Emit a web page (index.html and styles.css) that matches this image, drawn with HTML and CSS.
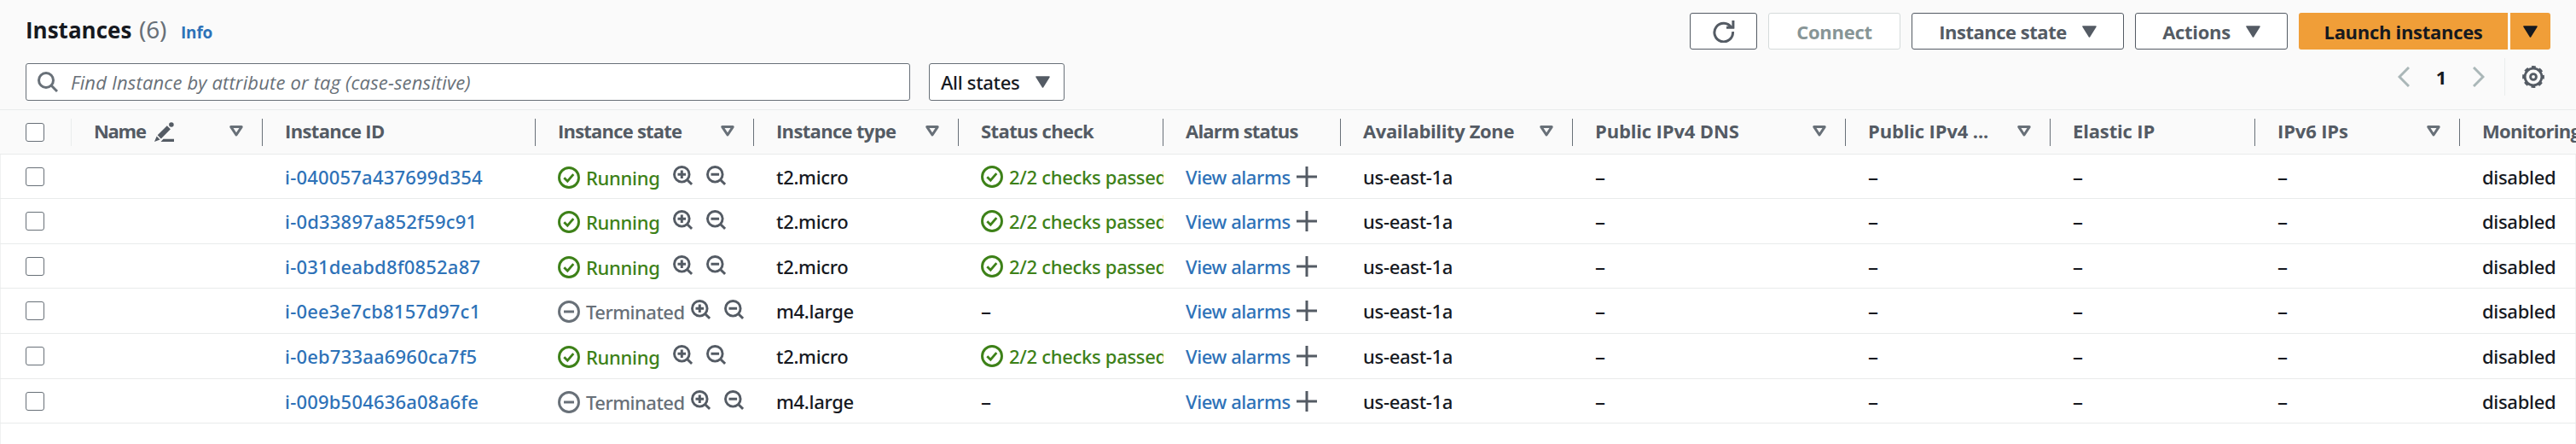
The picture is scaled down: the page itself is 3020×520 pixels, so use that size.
FILE: index.html
```
<!DOCTYPE html>
<html lang="en">
<head>
<meta charset="utf-8">
<title>Instances</title>
<link rel="stylesheet" href="styles.css">
</head>
<body>
<svg class="sprite" width="0" height="0">
  <symbol id="check" viewBox="0 0 26 26"><circle cx="13" cy="13" r="11.5" fill="none" stroke="currentColor" stroke-width="2.9"/><path d="M7.3 13.2l4 4 7-8" fill="none" stroke="currentColor" stroke-width="2.8"/></symbol>
  <symbol id="minus" viewBox="0 0 26 26"><circle cx="13" cy="13" r="11.5" fill="none" stroke="currentColor" stroke-width="2.9"/><path d="M7 13h12" stroke="currentColor" stroke-width="3"/></symbol>
  <symbol id="zin" viewBox="0 0 23 23"><circle cx="10.3" cy="10.3" r="8.8" fill="none" stroke="currentColor" stroke-width="2.9"/><path d="M16.5 16.5l5.6 5.4M5.5 10.3h9.6M10.3 5.5v9.6" fill="none" stroke="currentColor" stroke-width="3"/></symbol>
  <symbol id="zout" viewBox="0 0 23 23"><circle cx="10.3" cy="10.3" r="8.8" fill="none" stroke="currentColor" stroke-width="2.9"/><path d="M16.5 16.5l5.6 5.4M5.5 10.3h9.6" fill="none" stroke="currentColor" stroke-width="3"/></symbol>
  <symbol id="plus" viewBox="0 0 24 24"><path d="M0 12h24M12 0v24" stroke="currentColor" stroke-width="3"/></symbol>
  <symbol id="down" viewBox="0 0 17 14"><path d="M1 1h15l-7.5 12z" fill="currentColor" stroke="currentColor" stroke-width="1.5" stroke-linejoin="round"/></symbol>
  <symbol id="sort" viewBox="0 0 16 13"><path d="M1.8 1.6h12.4L8 11z" fill="none" stroke="currentColor" stroke-width="3" stroke-linejoin="round"/></symbol>
</svg>
<main class="panel">
  <header class="head">
    <div class="line">
      <h1 class="title">Instances</h1><span class="count">(6)</span><a class="info">Info</a>
      <div class="actions">
        <button class="btn refresh"><svg width="26" height="26" viewBox="0 0 26 26" fill="none" stroke="currentColor" stroke-width="3"><path d="M23.5 13.2A10.8 10.8 0 1 1 21.8 8.2M23.9 0v9M16 8.2h9.3"/></svg></button>
        <button class="btn connect">Connect</button>
        <button class="btn state-btn">Instance state<svg class="down"><use href="#down"/></svg></button>
        <button class="btn actions-btn">Actions<svg class="down"><use href="#down"/></svg></button>
        <div class="split">
          <button class="btn primary launch">Launch instances</button>
          <button class="btn primary more"><svg class="down"><use href="#down"/></svg></button>
        </div>
      </div>
    </div>
    <div class="filters">
      <div class="search"><svg width="24" height="24" viewBox="0 0 24 24" fill="none" stroke="currentColor" stroke-width="3"><circle cx="10" cy="10" r="8.5"/><path d="M16 16l7 7"/></svg><span>Find Instance by attribute or tag (case-sensitive)</span></div>
      <div class="select">All states<svg class="down"><use href="#down"/></svg></div>
      <div class="pager">
        <svg class="chev" viewBox="0 0 14 24"><path d="M13 1L2 12l11 11"/></svg>
        <b class="page">1</b>
        <svg class="chev" viewBox="0 0 14 24"><path d="M1 1l11 11L1 23"/></svg>
        <div class="prefs"><svg width="26" height="26" viewBox="0 0 26 26" fill="none" stroke="currentColor"><circle cx="13" cy="13" r="9.9" stroke-width="2.8"/><circle cx="13" cy="13" r="11.6" stroke-width="2.6" stroke-dasharray="4.9 4.21" stroke-dashoffset="2.45"/><circle cx="13" cy="13" r="3.4" stroke-width="2.9"/></svg></div>
      </div>
    </div>
  </header>
  <section class="table">
    <div class="row labels">
      <div class="th first"><i class="box"></i></div>
      <div class="th name"><span>Name</span><svg class="pencil" viewBox="0 0 23 23" fill="currentColor"><circle cx="19.9" cy="3" r="2.8"/><path d="M14.8 4.2l4.1 4.1L7.8 19.4l-4.1-4.1zM2.7 16.6l3.9 3.9L0 23zM10.5 19.8H23V23H7.5z"/></svg><svg class="sort"><use href="#sort"/></svg></div>
      <div class="th id"><span>Instance ID</span></div>
      <div class="th state"><span>Instance state</span><svg class="sort"><use href="#sort"/></svg></div>
      <div class="th type"><span>Instance type</span><svg class="sort"><use href="#sort"/></svg></div>
      <div class="th status"><span>Status check</span></div>
      <div class="th alarm"><span>Alarm status</span></div>
      <div class="th zone"><span>Availability Zone</span><svg class="sort"><use href="#sort"/></svg></div>
      <div class="th"><span>Public IPv4 DNS</span><svg class="sort"><use href="#sort"/></svg></div>
      <div class="th"><span>Public IPv4 ...</span><svg class="sort"><use href="#sort"/></svg></div>
      <div class="th"><span>Elastic IP</span></div>
      <div class="th"><span>IPv6 IPs</span><svg class="sort"><use href="#sort"/></svg></div>
      <div class="th last"><span>Monitoring</span></div>
    </div>
    <div class="row">
      <div class="td"><i class="box"></i></div><div class="td"></div>
      <div class="td link id">i-040057a437699d354</div>
      <div class="td state running"><svg class="ic"><use href="#check"/></svg><span>Running</span><svg class="zoom"><use href="#zin"/></svg><svg class="zoom"><use href="#zout"/></svg></div>
      <div class="td">t2.micro</div>
      <div class="td ok"><svg class="ic"><use href="#check"/></svg><span>2/2 checks passed</span></div>
      <div class="td link alarm"><span>View alarms</span><svg class="plus"><use href="#plus"/></svg></div>
      <div class="td zone">us-east-1a</div>
      <div class="td dash">–</div><div class="td dash">–</div><div class="td dash">–</div><div class="td dash">–</div>
      <div class="td">disabled</div>
    </div>
    <div class="row tall">
      <div class="td"><i class="box"></i></div><div class="td"></div>
      <div class="td link id">i-0d33897a852f59c91</div>
      <div class="td state running"><svg class="ic"><use href="#check"/></svg><span>Running</span><svg class="zoom"><use href="#zin"/></svg><svg class="zoom"><use href="#zout"/></svg></div>
      <div class="td">t2.micro</div>
      <div class="td ok"><svg class="ic"><use href="#check"/></svg><span>2/2 checks passed</span></div>
      <div class="td link alarm"><span>View alarms</span><svg class="plus"><use href="#plus"/></svg></div>
      <div class="td zone">us-east-1a</div>
      <div class="td dash">–</div><div class="td dash">–</div><div class="td dash">–</div><div class="td dash">–</div>
      <div class="td">disabled</div>
    </div>
    <div class="row">
      <div class="td"><i class="box"></i></div><div class="td"></div>
      <div class="td link id">i-031deabd8f0852a87</div>
      <div class="td state running"><svg class="ic"><use href="#check"/></svg><span>Running</span><svg class="zoom"><use href="#zin"/></svg><svg class="zoom"><use href="#zout"/></svg></div>
      <div class="td">t2.micro</div>
      <div class="td ok"><svg class="ic"><use href="#check"/></svg><span>2/2 checks passed</span></div>
      <div class="td link alarm"><span>View alarms</span><svg class="plus"><use href="#plus"/></svg></div>
      <div class="td zone">us-east-1a</div>
      <div class="td dash">–</div><div class="td dash">–</div><div class="td dash">–</div><div class="td dash">–</div>
      <div class="td">disabled</div>
    </div>
    <div class="row tall">
      <div class="td"><i class="box"></i></div><div class="td"></div>
      <div class="td link id">i-0ee3e7cb8157d97c1</div>
      <div class="td state ended"><svg class="ic"><use href="#minus"/></svg><span>Terminated</span><svg class="zoom"><use href="#zin"/></svg><svg class="zoom"><use href="#zout"/></svg></div>
      <div class="td">m4.large</div>
      <div class="td dash">–</div>
      <div class="td link alarm"><span>View alarms</span><svg class="plus"><use href="#plus"/></svg></div>
      <div class="td zone">us-east-1a</div>
      <div class="td dash">–</div><div class="td dash">–</div><div class="td dash">–</div><div class="td dash">–</div>
      <div class="td">disabled</div>
    </div>
    <div class="row tall">
      <div class="td"><i class="box"></i></div><div class="td"></div>
      <div class="td link id">i-0eb733aa6960ca7f5</div>
      <div class="td state running"><svg class="ic"><use href="#check"/></svg><span>Running</span><svg class="zoom"><use href="#zin"/></svg><svg class="zoom"><use href="#zout"/></svg></div>
      <div class="td">t2.micro</div>
      <div class="td ok"><svg class="ic"><use href="#check"/></svg><span>2/2 checks passed</span></div>
      <div class="td link alarm"><span>View alarms</span><svg class="plus"><use href="#plus"/></svg></div>
      <div class="td zone">us-east-1a</div>
      <div class="td dash">–</div><div class="td dash">–</div><div class="td dash">–</div><div class="td dash">–</div>
      <div class="td">disabled</div>
    </div>
    <div class="row">
      <div class="td"><i class="box"></i></div><div class="td"></div>
      <div class="td link id">i-009b504636a08a6fe</div>
      <div class="td state ended"><svg class="ic"><use href="#minus"/></svg><span>Terminated</span><svg class="zoom"><use href="#zin"/></svg><svg class="zoom"><use href="#zout"/></svg></div>
      <div class="td">m4.large</div>
      <div class="td dash">–</div>
      <div class="td link alarm"><span>View alarms</span><svg class="plus"><use href="#plus"/></svg></div>
      <div class="td zone">us-east-1a</div>
      <div class="td dash">–</div><div class="td dash">–</div><div class="td dash">–</div><div class="td dash">–</div>
      <div class="td">disabled</div>
    </div>
  </section>
</main>
</body>
</html>
```
FILE: styles.css
```
* { box-sizing: border-box; }
body { margin: 0; overflow: hidden; font: 500 22px/30px "Noto Sans", sans-serif; letter-spacing: -.3px; color: #16191f; background: #fff; }
svg { display: block; flex: none; }
.sprite { position: absolute; }
.panel { width: 3020px; height: 520px; overflow: hidden; box-shadow: inset 1px 0 #f0f1f1, inset -1px 0 #f0f1f1; }

.head { height: 129px; padding: 15px 30px 0; background: #fafafa; border-bottom: 1px solid #e9ebeb; }
.line { display: flex; height: 43px; align-items: baseline; }
.title { margin: 0; font: 700 26px/38px "Open Sans", sans-serif; letter-spacing: 0; width: 133px; white-space: nowrap; }
.count { font-size: 28px; font-weight: 400; line-height: 38px; color: #687078; width: 49px; letter-spacing: -.2px; }
.info { font: 700 19px/38px "Open Sans", sans-serif; color: #2e72b8; letter-spacing: -.2px; }
.actions { display: flex; align-self: flex-start; gap: 13px; margin-left: auto; }
.btn { display: flex; align-items: center; justify-content: center; height: 43px; padding: 0; border: 1.5px solid #545b64; border-radius: 3px; background: #fff; color: #545b64; font: 700 22px/30px "Open Sans", sans-serif; letter-spacing: -.3px; white-space: nowrap; }
.refresh { width: 79px; }
.connect { width: 155px; color: #879596; border-color: #d5dbdb; }
.state-btn { width: 249px; letter-spacing: -.49px; gap: 18px; }
.actions-btn { width: 179px; gap: 18px; }
.down { width: 17px; height: 14px; }
.split { display: flex; gap: 3px; }
.primary { border: 0; background: #f09e38; color: #16191f; }
.launch { width: 245px; border-radius: 3px 0 0 3px; }
.more { width: 47px; border-radius: 0 3px 3px 0; }

.filters { display: flex; margin-top: 10px; }
.search { display: flex; align-items: center; gap: 15px; width: 1037px; height: 44px; margin-top: 6px; padding-left: 13px; border: 1px solid #687078; border-radius: 3px; background: #fff; color: #687078; font: italic 500 22px/30px "Open Sans", sans-serif; letter-spacing: .15px; }
.select { display: flex; align-items: center; justify-content: space-between; width: 159px; height: 44px; margin: 6px 0 0 22px; padding: 0 16px 0 13px; border: 1px solid #687078; border-radius: 3px; background: #fff; }
.select .down { color: #545b64; }
.pager { display: flex; align-items: center; height: 44px; margin-left: auto; }
.chev { width: 14px; height: 24px; fill: none; stroke: #aab7b8; stroke-width: 3; }
.page { width: 74px; text-align: center; font-family: "Open Sans", sans-serif; }
.prefs { display: flex; align-items: center; height: 44px; margin-left: 23px; padding: 0 7px 0 20px; border-left: 1px solid #eaeded; color: #545b64; }

.row { display: grid; grid-template-columns: 84px 224px 320px 256px 240px 240px 208px 272px 320px 240px 240px 240px 240px; height: 52px; border-bottom: 1px solid #e9ebeb; width: max-content; }
.tall { height: 53px; }
.labels { background: #fafafa; }
.td, .th { display: flex; align-items: center; min-width: 0; padding-left: 26px; white-space: nowrap; overflow: hidden; }
.td:first-child, .first { padding-left: 30px; }
.th { color: #545b64; font: 700 22px/30px "Open Sans", sans-serif; letter-spacing: -.15px; }
.th span { padding-bottom: 3px; }
.th::after { content: ""; width: 1px; height: 32px; margin-left: auto; background: #687078; }
.first::after { background: #eaeded; }
.sort { width: 16px; height: 13px; margin: 0 22px 2px auto; color: #687078; }
.th:has(.sort)::after { margin-left: 0; }
.name { letter-spacing: -1.3px; }
.pencil { width: 23px; height: 23px; margin-left: 10px; }
.th.id { letter-spacing: -.63px; }
.th.state { letter-spacing: -.79px; }
.th.type { letter-spacing: -.67px; }
.th.status { letter-spacing: -.6px; }
.th.alarm { letter-spacing: -.8px; }
.th.zone { letter-spacing: -.37px; }
.th.last { letter-spacing: -.7px; }
.box { width: 22px; height: 22px; border: 1.6px solid #687078; border-radius: 3px; background: #fff; }
.link { color: #2e72b8; }
.td.id { letter-spacing: .2px; }
.ic { width: 26px; height: 26px; margin-right: 7px; }
.td.state { padding-top: 2px; }
.running { color: #3d8118; }
.state span { flex: none; }
.running span { width: 102px; }
.ended { color: #687078; }
.ended span { width: 123px; letter-spacing: -.5px; }
.zoom { width: 23px; height: 23px; margin: 0 16px 5px 0; color: #545b64; }
.ok { color: #3d8118; }
.ok span { letter-spacing: -.3px; }
.alarm .plus { width: 24px; height: 24px; margin-left: 7px; color: #545b64; }
.td.alarm span { letter-spacing: -.4px; }
.dash { font-size: 24px; }
```
